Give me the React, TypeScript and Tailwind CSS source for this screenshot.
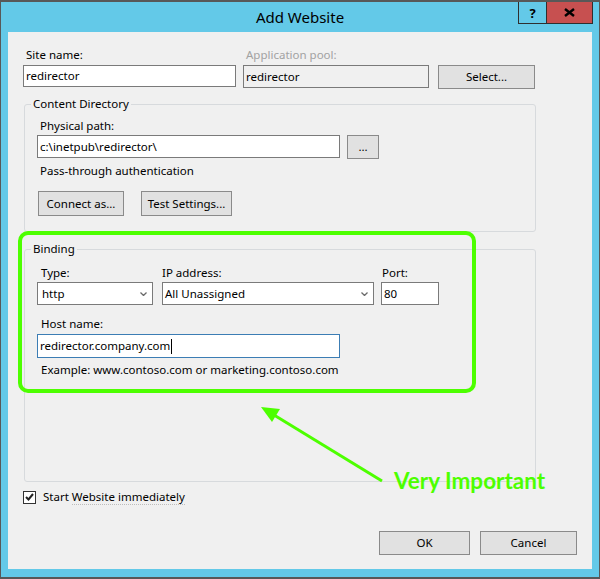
import React from "react";

const font = "font-['Noto_Sans',sans-serif] text-[11.5px] leading-[16px] text-black";

function Chevron() {
  return (
    <svg width="7" height="4" viewBox="0 0 7 4" className="shrink-0">
      <path d="M0.5 0.5 L3.5 3.5 L6.5 0.5" fill="none" stroke="#6a6a6a" strokeWidth="1.3" />
    </svg>
  );
}

function Btn({ className, children }: { className: string; children: React.ReactNode }) {
  return (
    <div
      className={`flex items-center justify-center border border-[#8a8a8a] bg-[#e1e1e1] ${className}`}
    >
      {children}
    </div>
  );
}

function TextBox({ className, children }: { className: string; children: React.ReactNode }) {
  return (
    <div className={`flex items-center border border-[#7a7a7a] bg-white pl-[2px] ${className}`}>
      {children}
    </div>
  );
}

function Select({ className, value }: { className: string; value: string }) {
  return (
    <div
      className={`flex items-center justify-between border border-[#7a7a7a] bg-white pr-[5px] ${className}`}
    >
      <span>{value}</span>
      <Chevron />
    </div>
  );
}

export default function App() {
  return (
    <div
      className={`relative flex h-[579px] w-[600px] flex-col overflow-hidden border-x border-t-2 border-b-2 border-[#585858] bg-[#63c9e8] ${font}`}
    >
      {/* title bar */}
      <div className="grid h-[30px] shrink-0 grid-cols-[1fr_auto_1fr]">
        <div />
        <div className="pt-[5px] text-[15px] leading-[20px]">Add Website</div>
        <div className="flex items-start justify-end pr-[6px]">
          <div className="flex h-[22px] w-[28px] items-center justify-center border-b border-l border-[#2f2f2f] text-[13px] font-bold">
            ?
          </div>
          <div className="flex h-[22px] w-[47px] items-center justify-center border-x border-b border-[#2f2f2f] bg-[#c75050]">
            <svg width="11" height="9" viewBox="0 0 11 9">
              <path d="M1 1 L10 8 M10 1 L1 8" stroke="#000" strokeWidth="2.4" />
            </svg>
          </div>
        </div>
      </div>

      {/* dialog body */}
      <div className="mx-[7px] flex h-[537px] shrink-0 flex-col bg-[#f0f0f0] px-[15px]">
        <div className="mt-[15px] flex items-start">
          <div className="flex w-[213px] flex-col">
            <span className="pl-[3px]">Site name:</span>
            <TextBox className="mt-[2px] h-[22px]">redirector</TextBox>
          </div>
          <div className="ml-[7px] flex w-[186px] flex-col">
            <span className="pl-[3px] text-[#a2a2a2]">Application pool:</span>
            <div className="mt-[2px] flex h-[23px] items-center border border-[#7a7a7a] pl-[2px]">
              redirector
            </div>
          </div>
          <Btn className="ml-[9px] mt-[18px] h-[24px] w-[97px]">Select...</Btn>
        </div>

        {/* Content Directory group */}
        <div className="ml-[1px] mt-[15px] flex h-[128px] w-[512px] flex-col items-start rounded-[3px] border border-[#d7dadd] pl-[12px]">
          <span className="-ml-[6px] -mt-[9px] bg-[#f0f0f0] px-[2px]">Content Directory</span>
          <span className="mt-[6px] pl-[3px]">Physical path:</span>
          <div className="mt-[1px] flex items-start">
            <TextBox className="h-[23px] w-[303px]">c:\inetpub\redirector\</TextBox>
            <Btn className="ml-[7px] h-[24px] w-[32px]">...</Btn>
          </div>
          <span className="mt-[4px] pl-[3px]">Pass-through authentication</span>
          <div className="mt-[12px] flex">
            <Btn className="ml-[1px] h-[25px] w-[86px]">Connect as...</Btn>
            <Btn className="ml-[17px] h-[25px] w-[91px]">Test Settings...</Btn>
          </div>
        </div>

        {/* Binding group */}
        <div className="ml-[1px] mt-[17px] flex h-[233px] w-[512px] flex-col items-start rounded-[3px] border border-[#d7dadd] pl-[12px]">
          <span className="-ml-[6px] -mt-[9px] bg-[#f0f0f0] px-[2px]">Binding</span>
          <div className="mt-[8px] flex items-start">
            <div className="flex w-[116px] flex-col">
              <span className="pl-[4px]">Type:</span>
              <Select className="mt-[1px] h-[23px] pl-[4px]" value="http" />
            </div>
            <div className="ml-[9px] flex w-[212px] flex-col">
              <span>IP address:</span>
              <Select className="mt-[1px] h-[23px] pl-[2px]" value="All Unassigned" />
            </div>
            <div className="ml-[7px] flex w-[58px] flex-col">
              <span className="pl-[1px]">Port:</span>
              <TextBox className="mt-[1px] h-[23px]">80</TextBox>
            </div>
          </div>
          <span className="mt-[11px] pl-[4px]">Host name:</span>
          <div className="mt-[2px] flex h-[24px] w-[303px] items-center border border-[#3c7db4] bg-white pl-[2px]">
            redirector.company.com
            <span className="ml-[1px] h-[15px] w-px bg-black" />
          </div>
          <span className="mt-[4px] pl-[4px]">Example: www.contoso.com or marketing.contoso.com</span>
        </div>

        <div className="mt-[7px] flex h-[16px] items-center">
          <div className="flex h-[13px] w-[13px] items-center justify-center border border-[#333] bg-white">
            <svg width="9" height="8" viewBox="0 0 9 8">
              <path d="M1 4 L3.5 6.5 L8 1" fill="none" stroke="#222" strokeWidth="2" />
            </svg>
          </div>
          <span className="ml-[7px]">
            Start <span className="border-b border-dotted border-[#bdbdbd]">Website immediately</span>
          </span>
        </div>

        <div className="mt-[26px] flex justify-end gap-[10px]">
          <Btn className="h-[24px] w-[91px] border-[#3c7db4]">OK</Btn>
          <Btn className="h-[24px] w-[97px]">Cancel</Btn>
        </div>
      </div>

      {/* annotation overlay */}
      <div className="absolute left-[17px] top-[229px] h-[162px] w-[458px] rounded-[10px] border-[4px] border-[#4dff00]" />
      <svg className="absolute left-0 top-0" width="600" height="579" viewBox="0 0 600 579">
        <line x1="381" y1="479" x2="273" y2="413" stroke="#4dff00" strokeWidth="3" />
        <polygon points="260,405 279,407 271,420" fill="#4dff00" />
      </svg>
      <span className="absolute left-[393px] top-[464px] font-['Lato',sans-serif] text-[22.5px] font-bold leading-[30px] text-[#4dff00]">
        Very Important
      </span>
    </div>
  );
}
